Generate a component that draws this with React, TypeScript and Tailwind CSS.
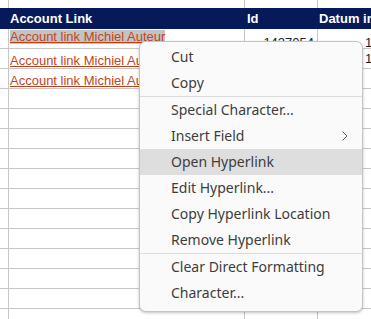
import { ChevronRight } from "lucide-react"

const rows = [
  { link: "Account link Michiel Auteur", id: "1427054", datum: "15-03-2021", active: true },
  { link: "Account link Michiel Auteur", id: "1427055", datum: "15-03-2021" },
  { link: "Account link Michiel Auteur", id: "1427056", datum: "" },
]

type Item = { label: string; sub?: boolean; hover?: boolean } | "sep"

const menu: Item[] = [
  { label: "Cut" },
  { label: "Copy" },
  "sep",
  { label: "Special Character..." },
  { label: "Insert Field", sub: true },
  { label: "Open Hyperlink", hover: true },
  { label: "Edit Hyperlink..." },
  { label: "Copy Hyperlink Location" },
  { label: "Remove Hyperlink" },
  "sep",
  { label: "Clear Direct Formatting" },
  { label: "Character..." },
]

function Row({ children }: { children?: React.ReactNode }) {
  return (
    <div className="flex h-5 border-b border-[#c6c6c6]">
      {children ?? (
        <>
          <div className="w-[9px] shrink-0 border-r border-[#c6c6c6]" />
          <div className="w-[236px] shrink-0 border-r border-[#c6c6c6]" />
          <div className="w-[73px] shrink-0 border-r border-[#c6c6c6]" />
          <div className="flex-1" />
        </>
      )}
    </div>
  )
}

export default function App() {
  return (
    <div className="relative w-[371px] h-[319px] overflow-hidden bg-white font-['Liberation_Sans',Arial,sans-serif] text-[13px]">
      {/* Feuille */}
      <div className="flex h-2">
        <div className="w-[9px] shrink-0 border-r border-[#c6c6c6]" />
        <div className="w-[236px] shrink-0 border-r border-[#c6c6c6]" />
        <div className="w-[73px] shrink-0 border-r border-[#c6c6c6]" />
      </div>
      <div className="flex h-[21px] bg-[#061a5a] text-white font-bold items-center">
        <div className="w-[9px] shrink-0" />
        <div className="w-[236px] shrink-0 pl-[1px]">Account Link</div>
        <div className="w-[73px] shrink-0 pl-[2px]">Id</div>
        <div className="flex-1 min-w-0 pl-[1px] whitespace-nowrap overflow-hidden">Datum invoer</div>
      </div>
      {rows.map((r, i) => (
        <Row key={i}>
          <div className="w-[9px] shrink-0 border-r border-[#c6c6c6]" />
          <div className={`w-[236px] shrink-0 border-r border-[#c6c6c6] pl-[1px] flex ${r.active ? "items-start pt-[1px]" : "items-end"}`}>
            <span className={`text-[#c2461d] underline decoration-[#b8401a] leading-[14px] ${r.active ? "bg-[#c3c3c3]" : ""}`}>
              {r.link}
            </span>
          </div>
          <div className={`w-[73px] shrink-0 border-r border-[#c6c6c6] pr-[3px] text-right text-[#222] flex justify-end ${r.active ? "items-start pt-[4px]" : "items-end"}`}>
            {r.id}
          </div>
          <div className={`flex-1 min-w-0 overflow-hidden pl-[47px] text-[#222] whitespace-nowrap flex ${r.active ? "items-start pt-[4px]" : "items-end"}`}>
            {r.datum}
          </div>
        </Row>
      ))}
      {Array.from({ length: 12 }).map((_, i) => (
        <Row key={`e${i}`} />
      ))}

      {/* Menu contextuel */}
      <div className="absolute left-[139px] top-[41px] w-[224px] h-[271px] bg-[#fafafa] border border-[#c4c4c4] rounded-[7px] shadow-[0_1px_3px_rgba(0,0,0,0.25)] pt-[2px] font-['Noto_Sans',sans-serif] text-[14px] text-[#3d3d3d]">
        {menu.map((m, i) =>
          m === "sep" ? (
            <div key={i} className="h-px bg-[#dcdcdc]" />
          ) : (
            <div key={i} className={`flex items-center h-[26px] pl-[31px] pr-[9px] ${m.hover ? "bg-[#dedede]" : ""}`}>
              <span className="flex-1 -mt-[1px]">{m.label}</span>
              {m.sub && <ChevronRight size={16} strokeWidth={1.3} className="text-[#444]" />}
            </div>
          )
        )}
      </div>
    </div>
  )
}
